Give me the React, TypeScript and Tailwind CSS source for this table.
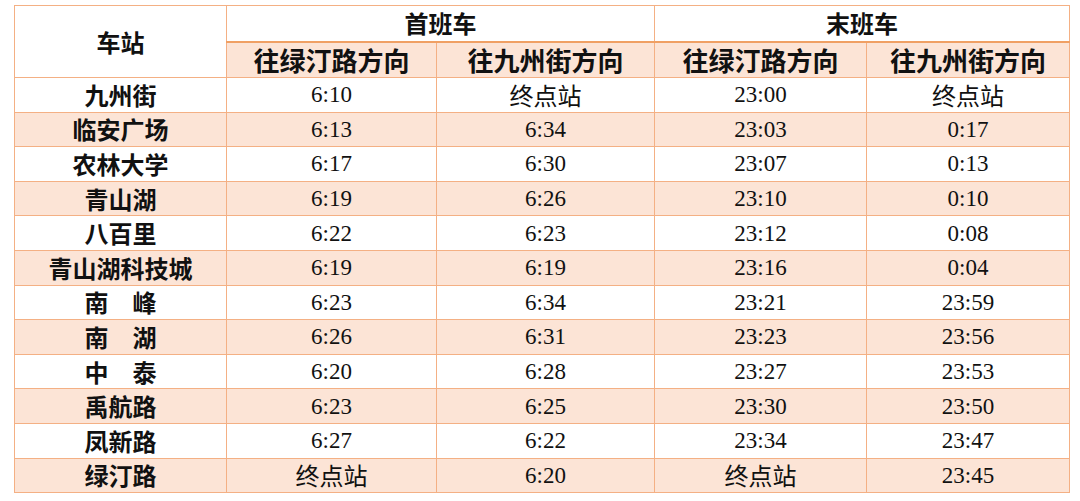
const rows: [string, string, string, string, string][] = [
  ["九州街", "6:10", "终点站", "23:00", "终点站"],
  ["临安广场", "6:13", "6:34", "23:03", "0:17"],
  ["农林大学", "6:17", "6:30", "23:07", "0:13"],
  ["青山湖", "6:19", "6:26", "23:10", "0:10"],
  ["八百里", "6:22", "6:23", "23:12", "0:08"],
  ["青山湖科技城", "6:19", "6:19", "23:16", "0:04"],
  ["南\u3000峰", "6:23", "6:34", "23:21", "23:59"],
  ["南\u3000湖", "6:26", "6:31", "23:23", "23:56"],
  ["中\u3000泰", "6:20", "6:28", "23:27", "23:53"],
  ["禹航路", "6:23", "6:25", "23:30", "23:50"],
  ["凤新路", "6:27", "6:22", "23:34", "23:47"],
  ["绿汀路", "终点站", "6:20", "终点站", "23:45"],
];

const cjk = "font-['Noto_Sans_CJK_SC',sans-serif]";
const serif = "font-['Liberation_Serif','Noto_Sans_CJK_SC',serif]";

const Cell = ({ value }: { value: string }) => {
  const isTime = /^\d/.test(value);
  return (
    <td
      className={`border border-[#f4b084] p-0 text-center leading-none text-[#111] ${
        isTime ? `${serif} text-[23px]` : `${cjk} text-[24px]`
      }`}
    >
      {value}
    </td>
  );
};

export default function App() {
  return (
    <div className="w-[1080px] h-[501px] bg-white pl-[14px] pt-[5px]">
      <table className="table-fixed border-collapse border-[1.5px] border-[#f4b084] w-[1055px]">
        <colgroup>
          <col className="w-[212px]" />
          <col className="w-[210px]" />
          <col className="w-[218px]" />
          <col className="w-[212px]" />
          <col className="w-[203px]" />
        </colgroup>
        <thead className={`${cjk} font-bold text-[24px] text-[#111]`}>
          <tr className="h-[36px]">
            <th rowSpan={2} className="border border-[#f4b084] font-bold leading-none">
              车站
            </th>
            <th colSpan={2} className="border border-[#f4b084] border-b-2 border-b-[#f0a064] font-bold leading-none">
              首班车
            </th>
            <th colSpan={2} className="border border-[#f4b084] border-b-2 border-b-[#f0a064] font-bold leading-none">
              末班车
            </th>
          </tr>
          <tr className="h-[36px] bg-[#fce4d6] text-[26px]">
            <th className="border border-[#f4b084] font-bold leading-none">往绿汀路方向</th>
            <th className="border border-[#f4b084] font-bold leading-none">往九州街方向</th>
            <th className="border border-[#f4b084] font-bold leading-none">往绿汀路方向</th>
            <th className="border border-[#f4b084] font-bold leading-none">往九州街方向</th>
          </tr>
        </thead>
        <tbody>
          {rows.map((r, i) => (
            <tr key={i} className={`h-[34.6px] ${i % 2 === 1 ? "bg-[#fce4d6]" : "bg-white"}`}>
              <td className={`border border-[#f4b084] p-0 text-center leading-none ${cjk} font-bold text-[24px] text-[#111]`}>
                {r[0]}
              </td>
              {r.slice(1).map((v, j) => (
                <Cell key={j} value={v} />
              ))}
            </tr>
          ))}
        </tbody>
      </table>
    </div>
  );
}
